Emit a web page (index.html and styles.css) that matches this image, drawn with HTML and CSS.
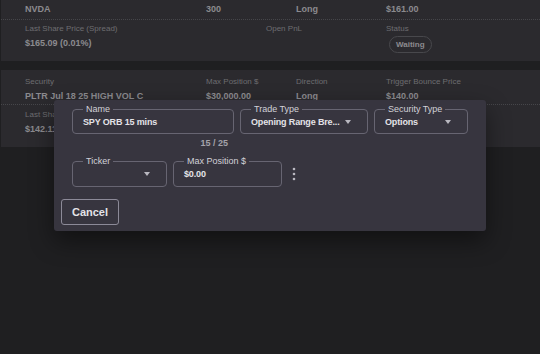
FILE: index.html
```html
<!DOCTYPE html>
<html lang="en">
<head>
    <meta charset="UTF-8">
    <meta name="viewport" content="width=device-width, initial-scale=1.0">
    <title>Strategies</title>
    <link rel="stylesheet" href="styles.css">
</head>
<body>
    <main class="list">
        <!-- NVDA strategy card (scrolled, labels above the fold) -->
        <section class="card card-first">
            <div class="row row-a">
                <div class="cell"><span class="value">NVDA</span></div>
                <div class="cell"><span class="value">300</span></div>
                <div class="cell"><span class="value">Long</span></div>
                <div class="cell"><span class="value">$161.00</span></div>
            </div>
            <div class="row row-b">
                <div class="cell"><span class="label">Last Share Price (Spread)</span><span class="value">$165.09 (0.01%)</span></div>
                <div class="cell"><span class="label">Open PnL</span><span class="value"></span></div>
                <div class="cell"><span class="label">Status</span><span class="chip">Waiting</span></div>
            </div>
        </section>

        <!-- PLTR strategy card -->
        <section class="card">
            <div class="row row-a">
                <div class="cell"><span class="label">Security</span><span class="value">PLTR Jul 18 25 HIGH VOL C</span></div>
                <div class="cell"><span class="label">Max Position $</span><span class="value">$30,000.00</span></div>
                <div class="cell"><span class="label">Direction</span><span class="value">Long</span></div>
                <div class="cell"><span class="label">Trigger Bounce Price</span><span class="value">$140.00</span></div>
            </div>
            <div class="row row-b">
                <div class="cell"><span class="label">Last Share Price (Spread)</span><span class="value">$142.11 (0.02%)</span></div>
                <div class="cell"><span class="label">Open PnL</span><span class="value"></span></div>
                <div class="cell"><span class="label">Status</span><span class="chip">Waiting</span></div>
            </div>
        </section>
    </main>

    <!-- New strategy dialog -->
    <div class="dialog">
        <div class="fields">
            <div class="field-wrap">
                <div class="field f-name">
                    <span class="legend">Name</span>
                    <span class="field-value">SPY ORB 15 mins</span>
                </div>
                <div class="counter">15 / 25</div>
            </div>
            <div class="field f-trade">
                <span class="legend">Trade Type</span>
                <span class="field-value">Opening Range Bre...</span>
                <span class="caret"></span>
            </div>
            <div class="field f-sec">
                <span class="legend">Security Type</span>
                <span class="field-value">Options</span>
                <span class="caret"></span>
            </div>
        </div>
        <div class="fields fields-2">
            <div class="field f-ticker">
                <span class="legend">Ticker</span>
                <span class="field-value"></span>
                <span class="caret"></span>
            </div>
            <div class="field f-max">
                <span class="legend">Max Position $</span>
                <span class="field-value">$0.00</span>
            </div>
            <svg class="kebab" width="4" height="14" viewBox="0 0 4 14">
                <circle cx="2" cy="2" r="1.3" fill="#b9b8c0"/>
                <circle cx="2" cy="7" r="1.3" fill="#b9b8c0"/>
                <circle cx="2" cy="12" r="1.3" fill="#b9b8c0"/>
            </svg>
        </div>
        <button type="button" class="btn-cancel">Cancel</button>
    </div>
</body>
</html>
```

FILE: styles.css
```css
body {
    margin: 0;
    padding: 0 0 0 1px;
    background: #1f1f21;
    font-family: "Liberation Sans", Arial, sans-serif;
    color: #8b8b8f;
    height: 354px;
    overflow: hidden;
}

.list {
    display: flex;
    flex-direction: column;
    gap: 9px;
}

.card {
    background: #2b2a2e;
    padding: 7px 24px 8px;
}

.card-first {
    padding-top: 2px;
}

.row {
    display: grid;
}

.row-a {
    grid-template-columns: 181px 90px 90px 1fr;
    padding: 0 24px 1px;
    border-bottom: 1px dotted #46464a;
    margin: 0 -24px;
}

.card-first .row-a {
    padding-bottom: 3px;
}

.row-b {
    grid-template-columns: 241px 120px 1fr;
    padding-top: 5px;
}

.card-first .row-b {
    padding-top: 4px;
}

.cell {
    display: flex;
    flex-direction: column;
    align-items: flex-start;
}

.label {
    font-size: 8px;
    line-height: 10px;
    color: #6d6d71;
    margin-bottom: 2px;
}

.value {
    font-size: 9px;
    line-height: 14px;
    font-weight: bold;
    min-height: 14px;
}

.chip {
    margin-left: 3px;
    font-size: 8px;
    font-weight: bold;
    line-height: 15px;
    padding: 0 6px;
    border: 1px solid #48484c;
    border-radius: 9px;
}

/* dialog */
.dialog {
    position: absolute;
    left: 54px;
    top: 100px;
    width: 432px;
    height: 131px;
    box-sizing: border-box;
    background: #37353f;
    border-radius: 3px;
    padding: 9px 0 0 18px;
    box-shadow: 0 10px 24px rgba(0, 0, 0, 0.45);
}

.fields {
    display: flex;
    gap: 6px;
    align-items: flex-start;
}

.fields-2 {
    margin-top: 13px;
    align-items: center;
}

.field {
    position: relative;
    box-sizing: border-box;
    height: 25px;
    border: 1px solid #676572;
    border-radius: 4px;
    display: flex;
    align-items: center;
    padding: 0 10px;
    color: #e4e3e8;
    font-size: 9px;
    font-weight: bold;
}

.legend {
    position: absolute;
    top: -6px;
    left: 10px;
    padding: 0 3px;
    background: #37353f;
    font-size: 9px;
    line-height: 10px;
    font-weight: normal;
    color: #d2d1d8;
}

.field-value {
    flex: 1;
    min-width: 0;
    white-space: nowrap;
    letter-spacing: -0.15px;
}

.caret {
    flex: none;
    width: 0;
    height: 0;
    border-left: 3.5px solid transparent;
    border-right: 3.5px solid transparent;
    border-top: 4px solid #b9b8c0;
    margin: 0 6px 0 3px;
}

.f-name { width: 162px; }
.f-trade { width: 128px; }
.f-sec { width: 94px; }
.f-ticker { width: 95px; height: 26px; }
.f-max { width: 109px; height: 26px; }

.counter {
    text-align: right;
    padding-right: 6px;
    margin-top: 4px;
    font-size: 9px;
    line-height: 10px;
    font-weight: bold;
    color: #a3a2aa;
}

.kebab {
    margin-left: 4px;
}

.btn-cancel {
    margin: 12px 0 0 -11px;
    width: 58px;
    height: 26px;
    background: transparent;
    border: 1px solid #8c8a98;
    border-radius: 3px;
    color: #e4e3e8;
    font-family: "Liberation Sans", Arial, sans-serif;
    font-size: 11px;
    font-weight: bold;
    padding: 0;
}
```
